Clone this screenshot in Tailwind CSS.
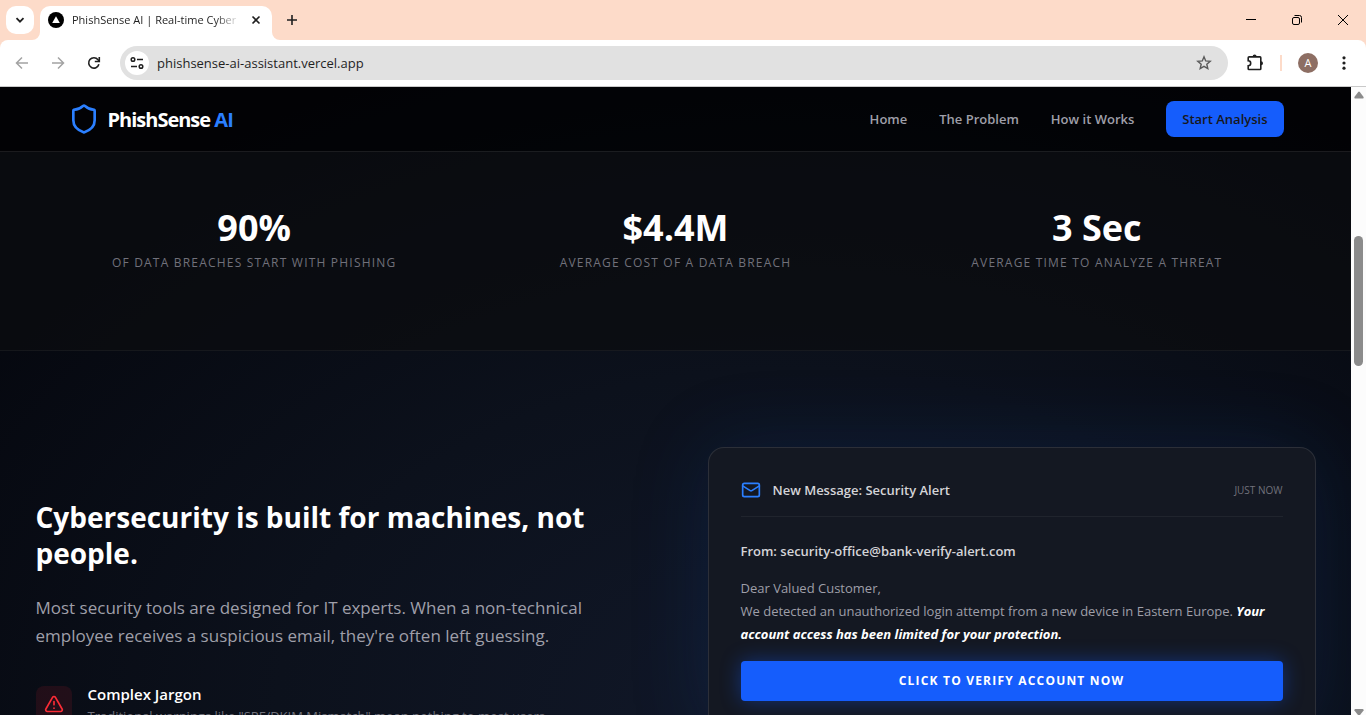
<!DOCTYPE html>
<html lang="en">
<head>
  <meta charset="UTF-8" />
  <title>PhishSense AI | Real-time Cyber</title>
  <script src="https://cdn.jsdelivr.net/npm/@tailwindcss/browser@4"></script>
</head>
<body class="h-screen flex flex-col overflow-hidden bg-white font-['Open_Sans',sans-serif]">

  <!-- Tab strip -->
  <header class="shrink-0 h-10 bg-[#fddbc9] flex items-start text-[#1f1f1f]">
    <button aria-label="Search tabs" class="ml-[6px] mt-[6px] size-7 rounded-[10px] bg-white flex items-center justify-center">
      <svg class="size-4" viewBox="0 0 16 16" fill="none" stroke="currentColor" stroke-width="1.8"><path d="M4.5 6.2 8 9.7l3.5-3.5" /></svg>
    </button>
    <div class="relative ml-[6px] mt-[6px] h-[34px] w-[232px] rounded-t-[10px] bg-white flex items-center pl-2 pr-2 pb-[6px]">
      <svg class="absolute -left-2 bottom-0 size-2" viewBox="0 0 8 8" fill="#fff"><path d="M8 0v8H0a8 8 0 0 0 8-8z" /></svg>
      <svg class="absolute -right-2 bottom-0 size-2" viewBox="0 0 8 8" fill="#fff"><path d="M0 0v8h8a8 8 0 0 1-8-8z" /></svg>
      <svg class="size-4 shrink-0" viewBox="0 0 16 16"><circle cx="8" cy="8" r="8" fill="#000" /><path d="M8 4.3 11.8 11H4.2z" fill="#fff" /></svg>
      <span class="ml-2 w-[168px] overflow-hidden whitespace-nowrap text-[11px] leading-4 mask-r-from-85% mask-r-to-100%">PhishSense AI | Real-time Cyber</span>
      <button aria-label="Close tab" class="ml-2 size-4 shrink-0">
        <svg class="size-4" viewBox="0 0 16 16" fill="none" stroke="currentColor" stroke-width="1.6"><path d="m4.5 4.5 7 7m0-7-7 7" /></svg>
      </button>
    </div>
    <button aria-label="New tab" class="ml-3 mt-3 size-4">
      <svg class="size-4" viewBox="0 0 16 16" fill="none" stroke="currentColor" stroke-width="1.6"><path d="M8 3v10M3 8h10" /></svg>
    </button>
    <div class="ml-auto mt-3 mr-[15px] flex gap-[30px] text-black">
      <button aria-label="Minimize" class="size-4"><svg class="size-4" viewBox="0 0 16 16" stroke="currentColor"><path d="M3 7.5h10" /></svg></button>
      <button aria-label="Restore" class="size-4"><svg class="size-4" viewBox="0 0 16 16" fill="none" stroke="currentColor"><rect x="3.5" y="5.5" width="7" height="7" rx="1.5" /><path d="M5.5 3.5h5a2 2 0 0 1 2 2v5" /></svg></button>
      <button aria-label="Close" class="size-4"><svg class="size-4" viewBox="0 0 16 16" fill="none" stroke="currentColor"><path d="m3 3 10 10M13 3 3 13" /></svg></button>
    </div>
  </header>

  <!-- Toolbar -->
  <div class="shrink-0 bg-[#fddbc9]">
    <div class="h-[47px] rounded-t-[8px] bg-white border-b border-[#c9c9c9] flex items-center text-[#1f1f1f]">
      <button aria-label="Back" class="ml-[14px] text-[#a3a3a3]"><svg class="size-4" viewBox="0 0 16 16" fill="none" stroke="currentColor" stroke-width="1.5"><path d="M14 8H3M8 2.5 2.5 8 8 13.5" /></svg></button>
      <button aria-label="Forward" class="ml-5 text-[#a3a3a3]"><svg class="size-4" viewBox="0 0 16 16" fill="none" stroke="currentColor" stroke-width="1.5"><path d="M2 8h11M8 2.5 13.5 8 8 13.5" /></svg></button>
      <button aria-label="Reload" class="ml-5"><svg class="size-4" viewBox="0 0 16 16" fill="none" stroke="currentColor" stroke-width="1.6"><path d="M12.9 9.3A5.2 5.2 0 1 1 12 4.7L13.2 6" /><path d="M13.3 2v4.5H8.8" /></svg></button>
      <div class="ml-[18px] flex-1 h-[34px] rounded-full bg-[#e1e1e1] flex items-center pl-[5px] pr-4">
        <button aria-label="Site information" class="size-6 rounded-full bg-white flex items-center justify-center">
          <svg class="size-4" viewBox="0 0 16 16" fill="none" stroke="currentColor" stroke-width="1.5"><circle cx="4" cy="4.5" r="1.8" /><path d="M8 4.5h6M2 11.5h6" /><circle cx="12" cy="11.5" r="1.8" /></svg>
        </button>
        <input aria-label="Address" type="text" value="phishsense-ai-assistant.vercel.app" class="ml-2 pt-[2px] flex-1 text-[13px] outline-none" />
        <button aria-label="Bookmark this page" class="text-[#5a5a5a]"><svg class="size-4" viewBox="0 0 16 16" fill="none" stroke="currentColor" stroke-width="1.4"><path d="m8 1.8 1.7 4.1 4.5.4-3.4 2.9 1 4.4L8 11.3l-3.8 2.3 1-4.4-3.4-2.9 4.5-.4z" /></svg></button>
      </div>
      <button aria-label="Extensions" class="ml-[18px]"><svg class="size-[18px]" viewBox="0 0 18 18" fill="none" stroke="currentColor" stroke-width="1.6"><path d="M3.2 2.9H14q.8 0 .8.8v11q0 .8-.8.8H3q-.8 0-.8-.8v-3a2.4 2.4 0 0 0 0-5V3.7q0-.8 1-.8z" /><path d="M6.6 2.5a2 2 0 0 1 4 0zM15 7.300a2 2 0 0 1 0 4z" fill="currentColor" stroke="none" /></svg></button>
      <span class="ml-4 h-4 w-[2px] bg-[#fddbc9]"></span>
      <button aria-label="Profile" class="ml-4 size-5 rounded-full bg-[#8d6e63] text-white text-[11px] leading-5 text-center">A</button>
      <button aria-label="Menu" class="ml-[18px] mr-[14px]"><svg class="size-4" viewBox="0 0 16 16" fill="currentColor"><circle cx="8" cy="2.8" r="1.6" /><circle cx="8" cy="8" r="1.6" /><circle cx="8" cy="13.2" r="1.6" /></svg></button>
    </div>
  </div>

  <div class="flex-1 min-h-0 flex">
    <!-- Page -->
    <div class="flex-1 min-w-0 overflow-hidden bg-[#05070e] bg-[radial-gradient(ellipse_75%_110%_at_58%_100%,#111829_0%,#0c111c_50%,#05070e_100%)] text-white">
      <nav class="h-[65px] border-b border-white/10 bg-black/60">
        <div class="h-full max-w-7xl mx-auto px-8 flex items-center justify-between">
          <a href="#" class="flex items-center gap-2">
            <svg class="size-8 text-[#2b7fff]" viewBox="0 0 24 24" fill="none" stroke="currentColor" stroke-width="2" stroke-linecap="round" stroke-linejoin="round"><path d="M20 13c0 5-3.5 7.5-7.66 8.95a1 1 0 0 1-.67-.01C7.5 20.5 4 18 4 13V6a1 1 0 0 1 1-1c2 0 4.5-1.2 6.24-2.72a1.17 1.17 0 0 1 1.52 0C14.51 3.81 17 5 19 5a1 1 0 0 1 1 1z" /></svg>
            <span class="pt-[2px] text-[20px] font-bold tracking-tighter">PhishSense <span class="text-[#2b7fff]">AI</span></span>
          </a>
          <div class="flex items-center gap-8 text-[13px] leading-5 font-semibold text-[#9f9fa9]">
            <a href="#home">Home</a>
            <a href="#problem">The Problem</a>
            <a href="#how">How it Works</a>
            <button class="h-9 px-4 rounded-lg bg-[#155dfc] text-[#18181b]">Start Analysis</button>
          </div>
        </div>
      </nav>

      <section class="border-b border-white/5 bg-[#0c0d10]/70">
        <div class="h-[198px] max-w-7xl mx-auto px-8 pt-14 grid grid-cols-3 gap-12 text-center">
          <div>
            <div class="text-[36px] leading-10 font-bold">90%</div>
            <div class="mt-[5px] text-[12px] leading-5 font-medium tracking-widest text-[#71717b]">OF DATA BREACHES START WITH PHISHING</div>
          </div>
          <div>
            <div class="text-[36px] leading-10 font-bold">$4.4M</div>
            <div class="mt-[5px] text-[12px] leading-5 font-medium tracking-widest text-[#71717b]">AVERAGE COST OF A DATA BREACH</div>
          </div>
          <div>
            <div class="text-[36px] leading-10 font-bold">3 Sec</div>
            <div class="mt-[5px] text-[12px] leading-5 font-medium tracking-widest text-[#71717b]">AVERAGE TIME TO ANALYZE A THREAT</div>
          </div>
        </div>
      </section>

      <section id="problem" class="pt-24">
        <div class="max-w-7xl mx-auto grid grid-cols-2 gap-16">
          <div class="pt-[52px]">
            <h2 class="text-[28px] leading-9 font-bold">Cybersecurity is built for machines, not people.</h2>
            <p class="mt-[23px] text-[17px] leading-7 text-[#9f9fa9]">Most security tools are designed for IT experts. When a non-technical employee receives a suspicious email, they're often left guessing.</p>
            <div class="mt-9 flex gap-4">
              <div class="size-9 shrink-0 rounded-lg bg-[#fb2c36]/10 flex items-center justify-center">
                <svg class="size-5 text-[#fb2c36]" viewBox="0 0 24 24" fill="none" stroke="currentColor" stroke-width="2" stroke-linecap="round" stroke-linejoin="round"><path d="m21.73 18-8-14a2 2 0 0 0-3.48 0l-8 14A2 2 0 0 0 4 21h16a2 2 0 0 0 1.73-3" /><path d="M12 9v4M12 17h.01" /></svg>
              </div>
              <div>
                <h3 class="text-[15px] leading-4 font-semibold">Complex Jargon</h3>
                <p class="mt-1 text-[13px] leading-5 text-[#71717b]">Traditional warnings like "SPF/DKIM Mismatch" mean nothing to most users.</p>
              </div>
            </div>
          </div>

          <!-- Sample phishing mail -->
          <div class="rounded-2xl border border-white/10 bg-[#141822] p-8 shadow-[0_0_80px_rgba(16,80,170,0.18)]">
            <div class="flex items-center gap-3 border-b border-white/5 pb-4">
              <svg class="size-5 text-[#2b7fff]" viewBox="0 0 24 24" fill="none" stroke="currentColor" stroke-width="2" stroke-linecap="round" stroke-linejoin="round"><path d="m22 7-8.99 5.73a2 2 0 0 1-2.01 0L2 7" /><rect x="2" y="4" width="20" height="16" rx="2" /></svg>
              <span class="text-[13px] leading-5 font-semibold text-[#d4d4d8]">New Message: Security Alert</span>
              <span class="ml-auto text-[10px] leading-4 text-[#71717b]">JUST NOW</span>
            </div>
            <p class="mt-[23px] text-[13px] leading-[23px] font-semibold text-[#d4d4d8]">From: security-office@bank-verify-alert.com</p>
            <p class="mt-[14px] text-[13px] leading-[23px] text-[#9f9fa9]">Dear Valued Customer,<br />We detected an unauthorized login attempt from a new device in Eastern Europe. <em class="font-bold text-white">Your account access has been limited for your protection.</em></p>
            <button class="mt-[15px] h-10 w-full rounded-sm bg-[#155dfc] text-[12px] font-bold tracking-widest shadow-[0_0_20px_rgba(21,93,252,0.4)]">CLICK TO VERIFY ACCOUNT NOW</button>
          </div>
        </div>
      </section>
    </div>

    <!-- Scrollbar -->
    <div class="w-[15px] shrink-0 bg-[#fcfcfc] flex flex-col items-center text-[#8b8b8b]">
      <svg class="mt-1 w-[10px] h-2" viewBox="0 0 10 8" fill="currentColor"><path d="M4.2 1q.8-.8 1.6 0L9.6 6q.4 1.5-1 1.5H1.4Q0 7.5.4 6z" /></svg>
      <div class="mt-[137px] h-[130px] w-[9px] rounded-full bg-[#8b8b8b]"></div>
      <svg class="mt-auto w-[10px] h-[6px]" viewBox="0 0 10 6" fill="currentColor"><path d="M1.4 0h7.2q1.4 0 1 1.5L6 6H4L.4 1.5Q0 0 1.4 0z" /></svg>
    </div>
  </div>
</body>
</html>
